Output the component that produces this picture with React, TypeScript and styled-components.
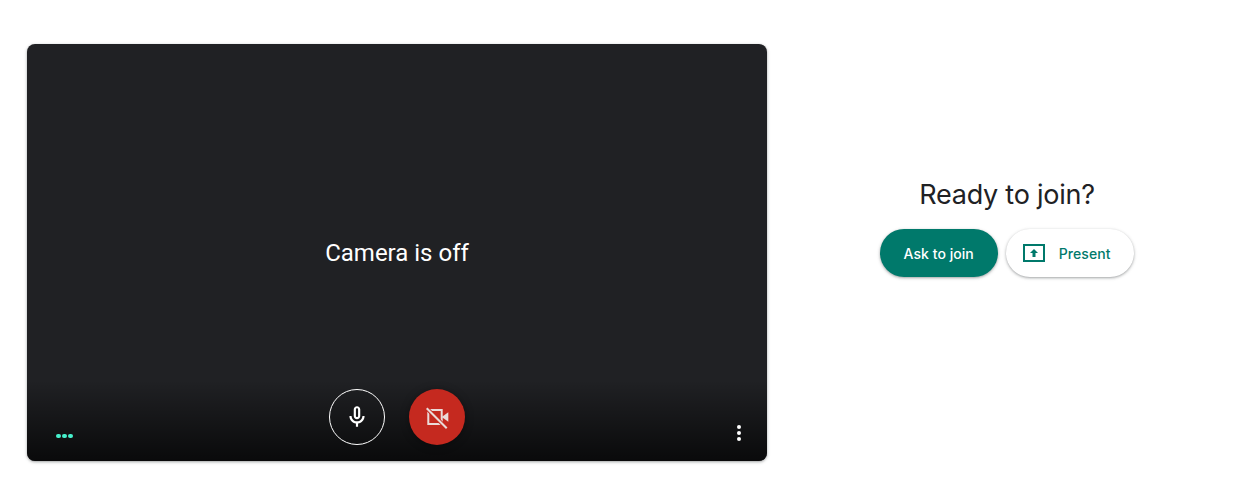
import React from 'react';
import styled, { createGlobalStyle } from 'styled-components';

const GlobalStyle = createGlobalStyle`
  html, body {
    margin: 0;
    padding: 0;
    background: #fff;
  }
`;

const Page = styled.div`
  display: flex;
  align-items: flex-start;
  width: 1242px;
  height: 487px;
  box-sizing: border-box;
  padding: 44px 0 0 27px;
  overflow: hidden;
`;

const Preview = styled.div`
  position: relative;
  display: flex;
  align-items: center;
  justify-content: center;
  flex: none;
  width: 740px;
  height: 417px;
  border-radius: 8px;
  background: #202124;
  box-shadow: 0 1px 2px rgba(60, 64, 67, 0.3), 0 1px 3px 1px rgba(60, 64, 67, 0.15);
  overflow: hidden;
`;

const CameraText = styled.div`
  font-family: Roboto, sans-serif;
  font-size: 24px;
  line-height: 32px;
  color: #fff;
  margin-top: 1px;
`;

const Controls = styled.div`
  position: absolute;
  left: 0;
  right: 0;
  bottom: 0;
  height: 81px;
  background: linear-gradient(to bottom, rgba(0, 0, 0, 0), rgba(0, 0, 0, 0.7));
`;

const RoundButtons = styled.div`
  position: absolute;
  left: 302px;
  bottom: 16px;
  display: flex;
  gap: 24px;
`;

const RoundButton = styled.div<{ $off?: boolean }>`
  display: flex;
  align-items: center;
  justify-content: center;
  width: 56px;
  height: 56px;
  box-sizing: border-box;
  border-radius: 50%;
  border: ${p => (p.$off ? 'none' : '1px solid #fff')};
  background: ${p => (p.$off ? '#c5291f' : 'transparent')};
  box-shadow: ${p => (p.$off ? '0 1px 8px rgba(0, 0, 0, 0.35)' : 'none')};
  color: ${p => (p.$off ? '#eadad8' : '#fff')};
`;

const Dots = styled.div`
  position: absolute;
  left: 29px;
  bottom: 23px;
  display: flex;
  gap: 1.5px;
`;

const Dot = styled.span`
  width: 4.5px;
  height: 4.5px;
  border-radius: 50%;
  background: #46f0cc;
`;

const MoreMenu = styled.div`
  position: absolute;
  right: 26px;
  bottom: 20px;
  display: flex;
  flex-direction: column;
  gap: 2px;
`;

const MoreDot = styled.span`
  width: 4px;
  height: 4px;
  border-radius: 50%;
  background: #fff;
`;

const JoinPanel = styled.div`
  flex: 1;
  display: flex;
  flex-direction: column;
  align-items: center;
  padding: 133px 0 0 5px;
`;

const Title = styled.div`
  font-family: Inter, sans-serif;
  font-size: 27px;
  line-height: 36px;
  letter-spacing: -0.25px;
  color: #202124;
`;

const Actions = styled.div`
  display: flex;
  gap: 8px;
  margin-top: 16px;
`;

const PillButton = styled.div<{ $primary?: boolean }>`
  display: flex;
  align-items: center;
  height: 48px;
  box-sizing: border-box;
  border-radius: 24px;
  font-family: Inter, sans-serif;
  font-size: 14px;
  font-weight: 500;
  letter-spacing: 0.05px;
  background: ${p => (p.$primary ? '#00796b' : '#fff')};
  color: ${p => (p.$primary ? '#fff' : '#00796b')};
  padding: ${p => (p.$primary ? '0 24px' : '0 24px 0 16px')};
  gap: 13px;
  box-shadow: 0 1px 2px rgba(60, 64, 67, 0.3), 0 1px 3px 1px rgba(60, 64, 67, 0.15);
`;

const App: React.FC = () => {
  return (
    <Page>
      <GlobalStyle />
      <Preview>
        <CameraText>Camera is off</CameraText>
        <Controls>
          <RoundButtons>
            <RoundButton>
              <svg width="26" height="26" viewBox="0 0 24 24" fill="currentColor">
                <path d="M12 14c1.66 0 3-1.34 3-3V5c0-1.66-1.34-3-3-3S9 3.34 9 5v6c0 1.66 1.34 3 3 3zm-1-9c0-.55.45-1 1-1s1 .45 1 1v6c0 .55-.45 1-1 1s-1-.45-1-1V5zm6 6c0 2.76-2.24 5-5 5s-5-2.24-5-5H5c0 3.53 2.61 6.43 6 6.92V21h2v-3.08c3.39-.49 6-3.39 6-6.92h-2z" />
              </svg>
            </RoundButton>
            <RoundButton $off>
              <svg width="24" height="24" viewBox="0 0 24 24" fill="none">
                <rect x="3.3" y="5" width="13.4" height="14" stroke="currentColor" strokeWidth="2" />
                <path d="M16.7 12l6.6-4.7v9.4z" fill="currentColor" />
                <path d="M1.7 3.3l20 20" stroke="#c5291f" strokeWidth="4" />
                <path d="M1.7 3.3l20 20" stroke="currentColor" strokeWidth="2" />
              </svg>
            </RoundButton>
          </RoundButtons>
          <Dots>
            <Dot />
            <Dot />
            <Dot />
          </Dots>
          <MoreMenu>
            <MoreDot />
            <MoreDot />
            <MoreDot />
          </MoreMenu>
        </Controls>
      </Preview>
      <JoinPanel>
        <Title>Ready to join?</Title>
        <Actions>
          <PillButton $primary>Ask to join</PillButton>
          <PillButton>
            <svg width="24" height="24" viewBox="0 0 24 24" fill="currentColor">
              <path d="M1 3h22v18H1V3zm2 2v14h18V5H3zm9 3l4 4h-2.5v4h-3v-4H8l4-4z" fillRule="evenodd" />
            </svg>
            Present
          </PillButton>
        </Actions>
      </JoinPanel>
    </Page>
  );
};

export default App;
